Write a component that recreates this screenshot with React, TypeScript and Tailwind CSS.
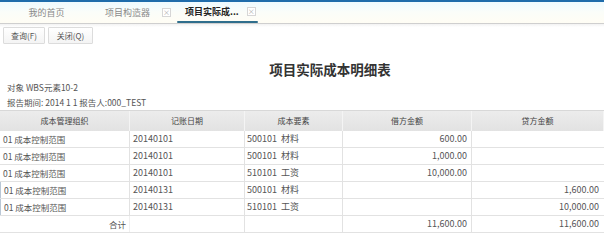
import React from "react";

const font = { fontFamily: '"Noto Sans CJK SC", "Noto Sans", sans-serif' };

const rows = [
  ["01 成本控制范围", "20140101", "500101  材料", "600.00", ""],
  ["01 成本控制范围", "20140101", "500101  材料", "1,000.00", ""],
  ["01 成本控制范围", "20140101", "510101  工资", "10,000.00", ""],
  ["01 成本控制范围", "20140131", "500101  材料", "", "1,600.00"],
  ["01 成本控制范围", "20140131", "510101  工资", "", "10,000.00"],
];

const cols = "grid grid-cols-[130px_115px_98px_129px_132px]";

function Close() {
  return (
    <span className="inline-flex items-center justify-center w-[9px] h-[9px] border border-[#d6d6d6] text-[7px] leading-none text-[#aaa] bg-white">
      ×
    </span>
  );
}

export default function App() {
  return (
    <div className="w-[604px] h-[240px] bg-white overflow-hidden text-[#444]" style={font}>
      <div className="h-[2px] bg-[#1f6cab]" />
      <div className="h-[21px] flex items-end bg-gradient-to-b from-[#eefaff] via-[#fbfdf9] to-[#fffdf4] text-[9px]">
        <div className="w-[93px] h-full flex items-center justify-center text-[#8a8a8a]">我的首页</div>
        <div className="w-[84px] h-full flex items-center gap-[12px] pl-[12px] text-[#8a8a8a]">
          <span>项目构造器</span>
          <Close />
        </div>
        <div className="w-[81px] h-full flex flex-col">
          <div className="flex-1 flex items-center gap-[8px] pl-[8px]">
            <span className="font-bold text-[#222]">项目实际成...</span>
            <Close />
          </div>
          <div className="h-[2px] rounded-full bg-[#2f6e8c]" />
        </div>
      </div>
      <div className="h-[1px] bg-[#cfcfcf]" />
      <div className="h-[3px] bg-gradient-to-b from-[#f2f2f2] to-white" />
      <div className="flex gap-[3px] pl-[3px] h-[17px]">
        <button className="w-[42px] h-full border border-[#dcdcdc] bg-gradient-to-b from-white to-[#f4f4f4] text-[8px] text-[#555] rounded-[1px]">
          查询(F)
        </button>
        <button className="w-[45px] h-full border border-[#dcdcdc] bg-gradient-to-b from-white to-[#f4f4f4] text-[8px] text-[#555] rounded-[1px]">
          关闭(Q)
        </button>
      </div>
      <div className="mt-[15px] h-[21px] flex items-center justify-center pl-[56px] text-[13.5px] font-bold text-[#333]">
        项目实际成本明细表
      </div>
      <div className="h-[15px] flex items-center pl-[7px] text-[8.5px] text-[#555]">对象 WBS元素10-2</div>
      <div className="h-[15px] flex items-center pl-[7px] text-[8.5px] text-[#555]">报告期间: 2014 1 1 报告人:000_TEST</div>
      <div className={`${cols} h-[21px] bg-gradient-to-b from-[#ececec] to-[#e2e2e2] border-t border-[#d8d8d8] text-[8px] text-[#444]`}>
        {["成本管理组织", "记账日期", "成本要素", "借方金额", "贷方金额"].map((h, i) => (
          <div key={i} className="flex items-center justify-center border-r border-[#f4f4f4]">
            {h}
          </div>
        ))}
      </div>
      {rows.map((r, ri) => (
        <div key={ri} className={`${cols} h-[17px] border-b border-[#e2e2e2] text-[9px] text-[#555]`}>
          <div className={`flex items-center pl-[3px] text-[8.5px] border-r border-[#e2e2e2] ${ri >= 3 ? "border-l border-l-[#b9c7d6]" : ""}`}>{r[0]}</div>
          <div className="flex items-center pl-[3px] border-r border-[#e2e2e2]">{r[1]}</div>
          <div className="flex items-center pl-[2px] border-r border-[#e2e2e2] whitespace-pre">{r[2]}</div>
          <div className="flex items-center justify-end pr-[4px] border-r border-[#e2e2e2]">{r[3]}</div>
          <div className="flex items-center justify-end pr-[5px]">{r[4]}</div>
        </div>
      ))}
      <div className={`${cols} h-[17px] border-b border-[#e2e2e2] text-[9px] text-[#555]`}>
        <div className="flex items-center justify-end pr-[3px] text-[8.5px] border-r border-[#f0f0f0]">合计</div>
        <div className="border-r border-[#e2e2e2]" />
        <div className="border-r border-[#e2e2e2]" />
        <div className="flex items-center justify-end pr-[4px] border-r border-[#e2e2e2]">11,600.00</div>
        <div className="flex items-center justify-end pr-[5px]">11,600.00</div>
      </div>
    </div>
  );
}
